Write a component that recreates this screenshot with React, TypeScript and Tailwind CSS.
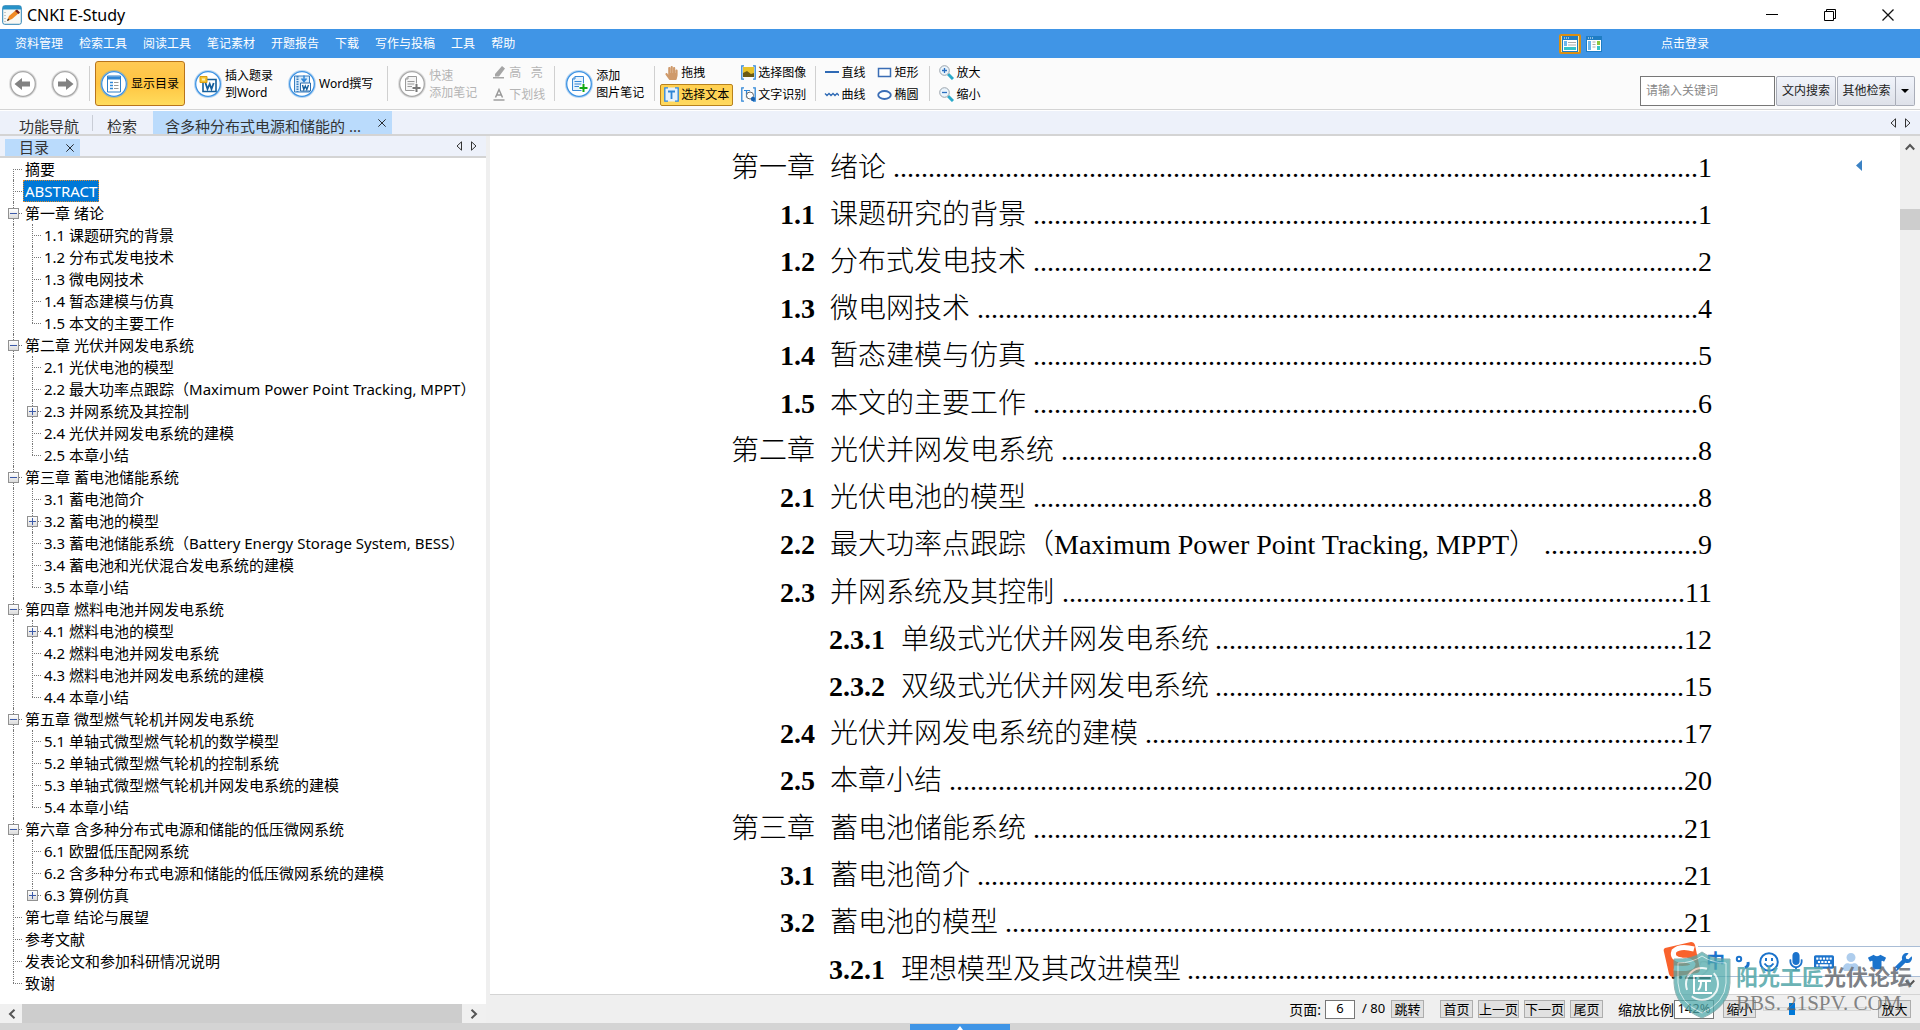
import React, { useLayoutEffect, useRef, useState } from "react";
import { FaHandPaper, FaKeyboard, FaMicrophone, FaTshirt, FaUser, FaWrench } from "react-icons/fa";

type TreeItem = { t: string; l: 0 | 1; box?: "minus" | "plus"; last?: boolean; sel?: boolean };

const tree: TreeItem[] = [
  { t: "摘要", l: 0 },
  { t: "ABSTRACT", l: 0, sel: true },
  { t: "第一章 绪论", l: 0, box: "minus" },
  { t: "1.1 课题研究的背景", l: 1 },
  { t: "1.2 分布式发电技术", l: 1 },
  { t: "1.3 微电网技术", l: 1 },
  { t: "1.4 暂态建模与仿真", l: 1 },
  { t: "1.5 本文的主要工作", l: 1, last: true },
  { t: "第二章 光伏并网发电系统", l: 0, box: "minus" },
  { t: "2.1 光伏电池的模型", l: 1 },
  { t: "2.2 最大功率点跟踪（Maximum Power Point Tracking, MPPT）", l: 1 },
  { t: "2.3 并网系统及其控制", l: 1, box: "plus" },
  { t: "2.4 光伏并网发电系统的建模", l: 1 },
  { t: "2.5 本章小结", l: 1, last: true },
  { t: "第三章 蓄电池储能系统", l: 0, box: "minus" },
  { t: "3.1 蓄电池简介", l: 1 },
  { t: "3.2 蓄电池的模型", l: 1, box: "plus" },
  { t: "3.3 蓄电池储能系统（Battery Energy Storage System, BESS）", l: 1 },
  { t: "3.4 蓄电池和光伏混合发电系统的建模", l: 1 },
  { t: "3.5 本章小结", l: 1, last: true },
  { t: "第四章 燃料电池并网发电系统", l: 0, box: "minus" },
  { t: "4.1 燃料电池的模型", l: 1, box: "plus" },
  { t: "4.2 燃料电池并网发电系统", l: 1 },
  { t: "4.3 燃料电池并网发电系统的建模", l: 1 },
  { t: "4.4 本章小结", l: 1, last: true },
  { t: "第五章 微型燃气轮机并网发电系统", l: 0, box: "minus" },
  { t: "5.1 单轴式微型燃气轮机的数学模型", l: 1 },
  { t: "5.2 单轴式微型燃气轮机的控制系统", l: 1 },
  { t: "5.3 单轴式微型燃气轮机并网发电系统的建模", l: 1 },
  { t: "5.4 本章小结", l: 1, last: true },
  { t: "第六章 含多种分布式电源和储能的低压微网系统", l: 0, box: "minus" },
  { t: "6.1 欧盟低压配网系统", l: 1 },
  { t: "6.2 含多种分布式电源和储能的低压微网系统的建模", l: 1 },
  { t: "6.3 算例仿真", l: 1, box: "plus", last: true },
  { t: "第七章 结论与展望", l: 0 },
  { t: "参考文献", l: 0 },
  { t: "发表论文和参加科研情况说明", l: 0 },
  { t: "致谢", l: 0, last: true },
];

const contents: [0 | 1 | 2, string, string, string][] = [
  [0, "第一章", "绪论", "1"],
  [1, "1.1", "课题研究的背景", "1"],
  [1, "1.2", "分布式发电技术", "2"],
  [1, "1.3", "微电网技术", "4"],
  [1, "1.4", "暂态建模与仿真", "5"],
  [1, "1.5", "本文的主要工作", "6"],
  [0, "第二章", "光伏并网发电系统", "8"],
  [1, "2.1", "光伏电池的模型", "8"],
  [1, "2.2", "最大功率点跟踪（Maximum Power Point Tracking, MPPT）", "9"],
  [1, "2.3", "并网系统及其控制", "11"],
  [2, "2.3.1", "单级式光伏并网发电系统", "12"],
  [2, "2.3.2", "双级式光伏并网发电系统", "15"],
  [1, "2.4", "光伏并网发电系统的建模", "17"],
  [1, "2.5", "本章小结", "20"],
  [0, "第三章", "蓄电池储能系统", "21"],
  [1, "3.1", "蓄电池简介", "21"],
  [1, "3.2", "蓄电池的模型", "21"],
  [2, "3.2.1", "理想模型及其改进模型", "22"],
];

const numberCell = {
  0: "w-[99px]",
  1: "ml-[49px] w-[50px] font-bold",
  2: "ml-[98px] w-[72px] font-bold",
};

const DOT_WIDTH = 7;

/** Row of leader dots that fills the space between a title and its page number. */
function Leader() {
  const ref = useRef<HTMLSpanElement>(null);
  const [count, setCount] = useState(0);
  useLayoutEffect(() => {
    const el = ref.current;
    if (!el) return;
    const fit = () => setCount(Math.max(0, Math.floor((el.clientWidth - 2) / DOT_WIDTH)));
    fit();
    const ro = new ResizeObserver(fit);
    ro.observe(el);
    return () => ro.disconnect();
  }, []);
  return (
    <span ref={ref} aria-hidden="true" className="min-w-0 flex-1 basis-0 text-right">
      {".".repeat(count)}
    </span>
  );
}

function Guide({ half, stub, box }: { half?: "top" | "bottom"; stub?: boolean; box?: "minus" | "plus" }) {
  const span = half === "top" ? "top-0 h-[11px]" : half === "bottom" ? "top-[11px] h-[11px]" : "top-0 h-[22px]";
  return (
    <span className="relative flex h-[22px] w-[19px] shrink-0 items-center justify-center">
      <span className={"absolute left-[9px] border-l border-dotted border-[#777] " + span} />
      {stub && <span className="absolute left-[9px] top-[11px] w-[9px] border-t border-dotted border-[#777]" />}
      {box && (
        <button aria-label={box === "minus" ? "折叠" : "展开"} className="relative h-[11px] w-[11px] border border-[#919191] bg-linear-to-b from-white to-[#dcdcdc]">
          <svg viewBox="0 0 9 9" className="block h-[9px] w-[9px]" stroke="#3c5aa8" fill="none">
            <path d={box === "minus" ? "M1 4.5h7" : "M1 4.5h7M4.5 1v7"} />
          </svg>
        </button>
      )}
    </span>
  );
}

function Tree() {
  return (
    <ul className="flex-1 overflow-hidden bg-white pl-1 text-[15px] leading-[22px]">
      {tree.map((n, i) => (
        <li key={n.t} className="flex h-[22px] items-center whitespace-nowrap">
          {n.l === 0 ? (
            <Guide half={i === 0 ? "bottom" : n.last ? "top" : undefined} stub box={n.box} />
          ) : (
            <>
              <Guide />
              <Guide half={n.last ? "top" : undefined} stub box={n.box} />
            </>
          )}
          <a
            href="#"
            className={
              n.sel
                ? "flex h-[22px] items-center border border-dotted border-[#e08a2c] bg-[#0078d7] px-px text-white"
                : "flex h-[22px] items-center px-[2px] text-black"
            }
          >
            {n.t}
          </a>
        </li>
      ))}
    </ul>
  );
}

function Arrows() {
  return (
    <div className="flex items-center gap-[9px]">
      <button aria-label="向左">
        <svg viewBox="0 0 6 10" className="block h-[10px] w-[6px]" fill="none" stroke="#333">
          <path d="M5.5 .8v8.4L1 5z" />
        </svg>
      </button>
      <button aria-label="向右">
        <svg viewBox="0 0 6 10" className="block h-[10px] w-[6px]" fill="none" stroke="#333">
          <path d="M.5 .8v8.4L5 5z" />
        </svg>
      </button>
    </div>
  );
}

function Round({ gray, children }: { gray?: boolean; children: React.ReactNode }) {
  const c = gray ? "#a9a9a9" : "#3d93e3";
  return (
    <svg viewBox="0 0 28 28" className="block h-7 w-7 shrink-0">
      <circle cx="14" cy="14" r="13" fill="#fff" stroke={c} strokeOpacity=".35" strokeWidth="2" />
      <circle cx="14" cy="14" r="12.3" fill="#fff" stroke={c} strokeWidth="1.3" />
      {children}
    </svg>
  );
}

function NoteIcon({ gray }: { gray?: boolean }) {
  const c = gray ? "#9a9a9a" : "#3a8ad6";
  return (
    <Round gray={gray}>
      <path d="M10 6.5h8.500v14h-11V9z" fill={gray ? "#f4f4f4" : "#e6f2fd"} stroke={c} />
      <path d="M7.500 9H10V6.500M9.500 11.500h7M9.500 14h7M9.500 16.500h5" stroke={c} fill="none" />
      <path d="M18.500 13.500v9M14 18h9" stroke="#fff" strokeWidth="4" />
      <path d="M18.500 14v8M14.500 18h8" stroke={gray ? "#777" : "#13a813"} strokeWidth="2" />
    </Round>
  );
}

function Sep() {
  return <span className="h-[35px] w-px shrink-0 bg-[#d0d0d0]" />;
}

function Tool({ icon, label, active }: { icon: React.ReactNode; label: string; active?: boolean }) {
  return (
    <button
      className={
        active
          ? "flex h-[22px] items-center gap-[2px] rounded-[2px] border border-[#b8821c] bg-linear-to-b from-[#ffcf4f] to-[#ffd95e] px-[3px] whitespace-nowrap"
          : "flex h-[22px] items-center gap-[2px] px-1 whitespace-pre"
      }
    >
      <span className="flex h-[15px] w-[15px] shrink-0 items-center justify-center">{icon}</span>
      {label}
    </button>
  );
}

const s15 = "block h-[15px] w-[15px]";

function Magnifier({ plus }: { plus?: boolean }) {
  return (
    <svg viewBox="0 0 15 15" className={s15} fill="none">
      <path d="M9 9l5 5" stroke="#2aa9c9" strokeWidth="3" />
      <circle cx="5.500" cy="5.500" r="4.800" fill="#eaf4fc" stroke="#9aa3ab" />
      <path d={plus ? "M3 5.500h5M5.500 3v5" : "M3 5.500h5"} stroke="#2b6fc0" strokeWidth="1.300" />
    </svg>
  );
}

function Toolbar() {
  return (
    <div className="flex h-[51px] shrink-0 items-center bg-[#fbfbfb] text-[12px] leading-[17px] text-black">
      <button aria-label="后退" className="ml-[9px]">
        <Round gray>
          <path d="M5.500 14l7.500-6v3.500h8v5h-8V20z" fill="#828282" />
        </Round>
      </button>
      <button aria-label="前进" className="ml-[14px] mr-[10px]">
        <Round gray>
          <path d="M22.500 14L15 8v3.500H7v5h8V20z" fill="#828282" />
        </Round>
      </button>
      <Sep />
      <button className="ml-[5px] flex h-[45px] w-[90px] items-center gap-[3px] rounded-[3px] border border-[#b8741c] bg-linear-to-b from-[#ffc955] via-[#ffc440] to-[#ffdc5c] pl-1 whitespace-nowrap">
        <Round>
          <path d="M7.500 6h13v16h-13z" fill="#fff" stroke="#2f7fc8" />
          <path d="M8 6.500h12v3H8z" fill="#2f86d6" />
          <path d="M10 12.500h3M10 15.500h3M10 18.500h3" stroke="#2f86d6" strokeWidth="1.300" />
          <path d="M14 12.500h4.500M14 15.500h4.500M14 18.500h4.500" stroke="#999" />
        </Round>
        显示目录
      </button>
      <button className="ml-[9px] flex items-center gap-[3px] text-left whitespace-nowrap">
        <Round>
          <path d="M9 9.500h13v12H9z" fill="#fff" stroke="#155f9c" strokeWidth="1.600" />
          <path d="M11.500 13l2 6 2.200-5 1.800 5 2.200-6" fill="none" stroke="#155f9c" strokeWidth="1.800" />
          <path d="M6 6.500h7v6H6z" fill="#f6c430" stroke="#d99c12" />
          <path d="M8 8.500h3v2H8z" fill="#fdf0b0" />
        </Round>
        <span>插入题录<br />到Word</span>
      </button>
      <button className="ml-[15px] mr-[14px] flex items-center gap-[3px] whitespace-nowrap">
        <Round>
          <path d="M6.500 6h15v16h-15z" fill="#d6eafb" stroke="#3a7fc0" />
          <path d="M9.500 6v16" stroke="#3a7fc0" strokeWidth="2" strokeDasharray="1.500 1" />
          <path d="M16 5.500v5M13.500 8.500l2.500 3 2.500-3" fill="none" stroke="#2f86d6" strokeWidth="1.500" />
          <path d="M12.500 13h10v8h-10z" fill="#fff" stroke="#2a6cab" />
          <path d="M14.500 15l1.300 4.500 1.500-3.500 1.500 3.500L20.500 15" fill="none" stroke="#155f9c" strokeWidth="1.400" />
        </Round>
        Word撰写
      </button>
      <Sep />
      <button disabled className="ml-[10px] flex items-center gap-[3px] text-left whitespace-nowrap text-[#b4b4b4]">
        <NoteIcon gray />
        <span>快速<br />添加笔记</span>
      </button>
      <div className="ml-[11px] mr-[5px] flex flex-col text-[#b4b4b4]">
        <Tool
          label="高   亮"
          icon={
            <svg viewBox="0 0 15 15" className={s15} fill="#a5a5a5">
              <path d="M3 9l7-8 3 2.500-6 8H3zM1 12h11v1.500H1z" />
            </svg>
          }
        />
        <Tool
          label="下划线"
          icon={
            <svg viewBox="0 0 15 15" className={s15} fill="none" stroke="#999">
              <path d="M3.500 10.500L7 2.500l3.500 8M5 8h4.500" strokeWidth="1.500" />
              <path d="M1.500 13h11" strokeWidth="1.400" />
            </svg>
          }
        />
      </div>
      <Sep />
      <button className="ml-[10px] mr-[10px] flex items-center gap-[3px] text-left whitespace-nowrap">
        <NoteIcon />
        <span>添加<br />图片笔记</span>
      </button>
      <Sep />
      <div className="ml-[5px] flex flex-col items-start">
        <Tool label="拖拽" icon={<FaHandPaper className="h-[14px] w-[13px] text-[#cf9a6b]" />} />
        <Tool
          active
          label="选择文本"
          icon={
            <svg viewBox="0 0 15 15" className={s15} fill="none" stroke="#2f86d6">
              <path d="M.5 .5h14v14H.5z" fill="#e4f1fd" stroke="none" />
              <path d="M4 .8H.8v13.400H4M11 .8h3.200v13.400H11" strokeWidth="1.300" />
              <path d="M4 4.500h7M7.500 4.500V12" strokeWidth="1.800" />
            </svg>
          }
        />
      </div>
      <div className="ml-1 mr-[5px] flex flex-col items-start">
        <Tool
          label="选择图像"
          icon={
            <svg viewBox="0 0 15 15" className={s15} fill="none">
              <path d="M2 2h11v10H2z" fill="#e8c22a" />
              <path d="M2 8l4-2 4 3 3-1v4H2z" fill="#6b5a14" />
              <path d="M3 .8H.8v13.400H3M12 .8h2.200v13.400H12" stroke="#2f86d6" strokeWidth="1.300" />
            </svg>
          }
        />
        <Tool
          label="文字识别"
          icon={
            <svg viewBox="0 0 15 15" className={s15} fill="none">
              <path d="M3 .8H.8v13.400H3M12 .8h2.200v13.400H12" stroke="#2f86d6" strokeWidth="1.300" />
              <path d="M3 3.500h6M5.500 3.500v7" stroke="#2f86d6" strokeWidth="1.200" />
              <circle cx="9" cy="8.500" r="3.500" stroke="#666" fill="#fff" />
              <circle cx="12" cy="12" r="2.200" fill="#1a62b0" />
            </svg>
          }
        />
      </div>
      <Sep />
      <div className="ml-[4px] grid grid-cols-2 gap-x-[4px]">
        <Tool label="直线" icon={<svg viewBox="0 0 15 15" className={s15} stroke="#2f6ab5" strokeWidth="2"><path d="M1 7h14" /></svg>} />
        <Tool label="矩形" icon={<svg viewBox="0 0 15 15" className={s15} fill="#fff" stroke="#3a6db5" strokeWidth="1.500"><path d="M1.500 3.500h12v8h-12z" /></svg>} />
        <Tool label="曲线" icon={<svg viewBox="0 0 15 15" className={s15} fill="none" stroke="#2f6ab5" strokeWidth="1.300"><path d="M1 6.500l2 2 2-2 2 2 2-2 2 2 2-2 2 2" /></svg>} />
        <Tool label="椭圆" icon={<svg viewBox="0 0 15 15" className={s15} fill="#fff" stroke="#3a6db5" strokeWidth="1.800"><ellipse cx="7.500" cy="8" rx="6.300" ry="4" /></svg>} />
      </div>
      <span className="w-[7px]" />
      <Sep />
      <div className="ml-[5px] flex flex-col items-start">
        <Tool label="放大" icon={<Magnifier plus />} />
        <Tool label="缩小" icon={<Magnifier />} />
      </div>
      <div className="ml-auto mr-[5px] mt-[14px] flex h-[30px] text-[12px] text-[#222]">
        <input aria-label="关键词" placeholder="请输入关键词" className="w-[135px] border border-[#777] bg-white px-[5px] placeholder:text-[#888]" />
        <button className="ml-px w-[60px] rounded-[2px] border border-[#a9adb8] bg-linear-to-b from-[#f1f4fb] to-[#dee1e9] whitespace-nowrap">文内搜索</button>
        <button className="ml-px w-[59px] rounded-l-[2px] border border-[#a9adb8] bg-linear-to-b from-[#f1f4fb] to-[#dee1e9] whitespace-nowrap">其他检索</button>
        <button aria-label="更多检索" className="flex w-[19px] items-center justify-center rounded-r-[2px] border border-l-0 border-[#a9adb8] bg-linear-to-b from-[#f1f4fb] to-[#dee1e9]">
          <svg viewBox="0 0 8 4" className="h-1 w-2"><path d="M0 0h8L4 4z" /></svg>
        </button>
      </div>
    </div>
  );
}

function Cross({ size }: { size: string }) {
  return (
    <svg viewBox="0 0 12 12" className={size} stroke="#111" fill="none" strokeWidth="1.300">
      <path d="M.5 .5l11 11M11.500 .5l-11 11" />
    </svg>
  );
}

function ImeBar() {
  return (
    <div className="absolute bottom-[53px] right-0 flex h-[31px] w-[222px] items-center border-y border-[#a9bdd6] bg-white/85 pl-[4px] text-[#1b73cc]">
      <svg viewBox="0 0 40 38" className="absolute -left-[35px] -top-[6px] h-[38px] w-[40px]">
        <path d="M2 7L28 1q3 0 4 3l5 24q0 3-3 4l-24 4q-3 0-4-3L1 11q-1-3 1-4z" fill="#f9622c" />
        <path d="M31 8q-14-4-20 2-3 8 8 9 9 0 11 4 0 6-19 4" fill="none" stroke="#fff" strokeWidth="5" />
      </svg>
      <span className="w-[27px] text-center text-[19px] font-bold leading-none">中</span>
      <svg viewBox="0 0 16 16" className="ml-[6px] h-4 w-4" fill="none" stroke="currentColor" strokeWidth="2">
        <circle cx="4" cy="5" r="2.200" />
        <path d="M13 8q1 4-3 6" strokeWidth="3" />
      </svg>
      <svg viewBox="0 0 20 20" className="ml-[8px] h-5 w-5" fill="none" stroke="currentColor" strokeWidth="2">
        <circle cx="10" cy="10" r="8.800" />
        <path d="M7 6v3M13 6v3M5.500 11.500q4.500 6 9 0" />
      </svg>
      <FaMicrophone className="ml-[9px] h-[19px] w-4" />
      <FaKeyboard className="ml-[10px] h-[20px] w-[20px]" />
      <FaUser className="ml-[9px] h-[18px] w-4 opacity-35" />
      <FaTshirt className="ml-[9px] h-[18px] w-[18px]" />
      <FaWrench className="ml-[8px] h-[18px] w-[18px]" />
    </div>
  );
}

function Watermark() {
  return (
    <div className="pointer-events-none absolute bottom-[11px] right-[8px] flex h-[68px] items-start whitespace-nowrap">
      <svg viewBox="0 0 60 68" className="h-[68px] w-[60px] opacity-75" fill="none">
        <path d="M30 1q10 8 28 7v24q-1 24-28 35Q3 56 2 32V8q18 1 28-7z" fill="#4fa9aa" stroke="#6f9c9c" />
        <path d="M30 5q10 7 24 7v20q-1 20-24 30Q7 52 6 32V12q14 0 24-7z" stroke="#c8e6e6" />
        <circle cx="30" cy="33" r="16" stroke="#e8f5f5" strokeWidth="2" strokeDasharray="36 8" />
        <path d="M40 25H22v17h18M26 30h13M29 30q0 7-3 9M34 30v10" stroke="#fff" strokeWidth="2" />
      </svg>
      <div className="ml-1 pt-[8px]">
        <div className="h-[34px] text-[22px] font-bold leading-[34px]">
          <span className="text-[#58a9ab]/90">阳光工匠</span>
          <span className="text-[#6c7076]/90">光伏论坛</span>
        </div>
        <div className="font-['Liberation_Serif',serif] text-[21px] leading-[20px] text-[#666]/80">BBS. 21SPV. COM</div>
      </div>
    </div>
  );
}

const pageButton = "h-[18px] border border-[#adadad] bg-[#e1e1e1] leading-[16px] whitespace-nowrap";

export default function App() {
  return (
    <div className="relative flex h-screen flex-col overflow-hidden bg-[#d4d4d4] font-['Noto_Sans','Noto_Sans_CJK_SC',sans-serif] text-black">
      <header className="flex h-[29px] shrink-0 items-center bg-white pl-[2px] pr-[3px]">
        <svg viewBox="0 0 20 20" className="h-5 w-5">
          <rect x=".7" y=".7" width="18.600" height="18.600" rx="2" fill="#f8f8f4" stroke="#2c83b5" />
          <path d="M1 1h18v3.500H1z" fill="#2792c8" />
          <path d="M3 7v10" stroke="#999" strokeDasharray="1 2" />
          <path d="M5 16l2-5 7-6 3 3-7 6z" fill="#f08a24" />
          <path d="M13 6l2-1.500 3 3L16.500 9z" fill="#6b1d1d" />
          <path d="M5 16l1-2.500 1.500 1.500z" fill="#222" />
        </svg>
        <h1 className="ml-[5px] text-[16px] leading-5">CNKI E-Study</h1>
        <div className="ml-auto flex">
          <button aria-label="最小化" className="flex h-[29px] w-[58px] items-center justify-center">
            <span className="h-px w-3 bg-black" />
          </button>
          <button aria-label="还原" className="flex h-[29px] w-[58px] items-center justify-center">
            <svg viewBox="0 0 12 12" className="h-3 w-3" fill="none" stroke="#000">
              <path d="M.5 2.500h9v9h-9zM2.500 2.500v-2h9v9h-2" />
            </svg>
          </button>
          <button aria-label="关闭" className="flex h-[29px] w-[58px] items-center justify-center">
            <Cross size="h-3 w-3" />
          </button>
        </div>
      </header>

      <nav className="flex h-[29px] shrink-0 items-center bg-[#4095e6] pl-[15px] text-[12px] text-white">
        <div className="flex gap-4">
          {["资料管理", "检索工具", "阅读工具", "笔记素材", "开题报告", "下载", "写作与投稿", "工具", "帮助"].map((m) => (
            <button key={m} className="whitespace-nowrap">{m}</button>
          ))}
        </div>
        <button aria-label="横向布局" className="ml-auto flex h-5 w-[22px] items-center justify-center rounded-[2px] border-2 border-[#d98e12] bg-[#ffe08a]">
          <svg viewBox="0 0 16 16" className="h-4 w-4">
            <path d="M0 0h16v16H0z" fill="#1f7dc4" />
            <path d="M1 4h14v11H1z" fill="#fff" />
            <path d="M2 5h3v5H2z" fill="#6cb6ee" />
            <path d="M6 6.500h8M6 9h8" stroke="#aaa" />
            <path d="M2 11h12v3H2z" fill="#35c3c9" />
            <path d="M2 2h1M4 2h1M6 2h1" stroke="#fff" />
          </svg>
        </button>
        <button aria-label="纵向布局" className="ml-[5px]">
          <svg viewBox="0 0 16 16" className="block h-4 w-4">
            <path d="M0 0h16v16H0z" fill="#1f7dc4" />
            <path d="M1 4h14v11H1z" fill="#fff" />
            <path d="M2 5h3v9H2z" fill="#6cb6ee" />
            <path d="M6.500 6h3M6.500 8.500h3M6.500 11h3" stroke="#aaa" />
            <path d="M11 5h3v4h-3z" fill="#8cc63f" />
            <path d="M11 10h3v4h-3z" fill="#35c3c9" />
            <path d="M2 2h1M4 2h1M6 2h1" stroke="#fff" />
          </svg>
        </button>
        <button className="ml-[59px] mr-[211px] whitespace-nowrap">点击登录</button>
      </nav>

      <Toolbar />

      <div className="mt-px flex h-6 shrink-0 items-stretch border-t border-white bg-[#edf1fa] text-[15px] text-[#333]">
        <button className="flex items-center pl-[19px] pt-[6px] leading-[18px] whitespace-nowrap">功能导航</button>
        <span className="ml-[13px] mt-1 h-4 w-px bg-[#c9cdd6]" />
        <button className="flex items-center pl-[14px] pt-[6px] leading-[18px] whitespace-nowrap">检索</button>
        <div className="ml-4 flex w-[239px] items-center justify-between bg-[#badbfc] pl-[12px] pr-[6px]">
          <button className="pt-[6px] leading-[18px] whitespace-nowrap">含多种分布式电源和储能的 ...</button>
          <button aria-label="关闭标签"><Cross size="h-2 w-2" /></button>
        </div>
        <div className="ml-auto flex items-center pr-[9px]"><Arrows /></div>
      </div>

      <div className="mt-[2px] flex min-h-0 flex-1">
        <aside className="flex w-[490px] shrink-0 flex-col bg-[#efefef] pr-1">
          <div className="flex h-5 shrink-0 items-center bg-[#edf1fa] pl-[5px] pr-[9px] text-[15px] text-[#333]">
            <div className="flex h-[17px] w-[75px] items-center justify-between self-end bg-[#badbfc] pl-[14px] pr-[6px]">
              <span className="leading-[17px]">目录</span>
              <button aria-label="关闭目录"><Cross size="h-2 w-2 block" /></button>
            </div>
            <div className="ml-auto"><Arrows /></div>
          </div>
          <div className="h-[2px] shrink-0 bg-[#d4d4d4]" />
          <Tree />
          <div className="flex h-[19px] shrink-0 items-stretch bg-[#f0f0f0] pl-px">
            <button aria-label="向左滚动" className="flex w-[21px] items-center justify-center">
              <svg viewBox="0 0 8 10" className="h-[10px] w-2" fill="none" stroke="#555" strokeWidth="2"><path d="M6.500 .8L2 5l4.500 4.200" /></svg>
            </button>
            <span className="flex-1 bg-[#cdcdcd]" />
            <button aria-label="向右滚动" className="flex w-[24px] items-center justify-center">
              <svg viewBox="0 0 8 10" className="h-[10px] w-2" fill="none" stroke="#555" strokeWidth="2"><path d="M1.500 .8L6 5 1.500 9.200" /></svg>
            </button>
          </div>
        </aside>

        <main className="flex min-w-0 flex-1 flex-col">
          <div className="flex min-h-0 flex-1 bg-white">
            <ol className="grid min-w-0 flex-1 auto-rows-fr grid-cols-1 pl-[241px] pr-[208px] pt-2 -mr-[20px] font-['Liberation_Serif','Noto_Sans_CJK_SC',serif] text-[28px] leading-[40px] font-light">
              {contents.map(([l, num, title, page]) => (
                <li key={num} className="flex items-center whitespace-nowrap">
                  <span className={"shrink-0 " + numberCell[l]}>{num}</span>
                  <span className="shrink-0">{title}</span>
                  <Leader />
                  <span className="shrink-0">{page}</span>
                </li>
              ))}
            </ol>
            <div className="flex w-5 shrink-0 flex-col items-center bg-[#efefef] py-[7px]">
              <svg viewBox="0 0 10 8" className="h-2 w-[10px]" fill="none" stroke="#555" strokeWidth="2"><path d="M.8 6.500L5 2l4.200 4.500" /></svg>
              <span className="mt-[58px] h-[21px] w-full bg-[#cdcdcd]" />
              <svg viewBox="0 0 10 8" className="mt-auto h-2 w-[10px]" fill="none" stroke="#555" strokeWidth="2"><path d="M.8 1.500L5 6l4.200-4.500" /></svg>
            </div>
          </div>
          <div className="flex h-[29px] shrink-0 items-center border-t border-[#d4d4d4] bg-[#efefef] pr-[9px] text-[13px]">
            <label htmlFor="page" className="ml-auto text-[14px] whitespace-nowrap">页面:</label>
            <input id="page" defaultValue="6" className="ml-1 h-[19px] w-[30px] border border-[#777] bg-white text-center" />
            <span className="ml-[7px] w-[29px] whitespace-nowrap">/ 80</span>
            <button className={pageButton + " w-[33px]"}>跳转</button>
            <button className={pageButton + " ml-[16px] w-[33px]"}>首页</button>
            <button className={pageButton + " ml-[5px] w-[41px]"}>上一页</button>
            <button className={pageButton + " ml-[5px] w-[41px]"}>下一页</button>
            <button className={pageButton + " ml-[5px] w-[33px]"}>尾页</button>
            <label htmlFor="zoom" className="ml-[15px] text-[14px] whitespace-nowrap">缩放比例</label>
            <input id="zoom" defaultValue="142%" className="h-[19px] w-[40px] border border-[#777] bg-white text-center" />
            <button className={pageButton + " ml-[9px] w-[33px]"}>缩小</button>
            <input
              type="range"
              aria-label="缩放"
              min={0}
              max={100}
              defaultValue={25}
              className="ml-[7px] mr-[7px] h-[13px] w-[108px] appearance-none bg-transparent [&::-webkit-slider-runnable-track]:h-[4px] [&::-webkit-slider-runnable-track]:border [&::-webkit-slider-runnable-track]:border-[#d6d6d6] [&::-webkit-slider-runnable-track]:bg-[#e7eaea] [&::-webkit-slider-thumb]:-mt-[5px] [&::-webkit-slider-thumb]:h-3 [&::-webkit-slider-thumb]:w-[6px] [&::-webkit-slider-thumb]:appearance-none [&::-webkit-slider-thumb]:bg-[#0078d7]"
            />
            <button className={pageButton + " w-[33px]"}>放大</button>
          </div>
        </main>
      </div>

      <footer className="flex h-[7px] shrink-0 items-end justify-center">
        <button aria-label="展开面板" className="flex h-[6px] w-[100px] items-end justify-center bg-[#4095e6]">
          <svg viewBox="0 0 6 4" className="h-1 w-[6px]" fill="#fff"><path d="M3 0l3 4H0z" /></svg>
        </button>
      </footer>

      <button aria-label="展开侧栏" className="absolute right-[58px] top-[160px]">
        <svg viewBox="0 0 6 11" className="block h-[11px] w-[6px]" fill="#3b82c4"><path d="M6 0v11L0 5.500z" /></svg>
      </button>
      <ImeBar />
      <Watermark />
    </div>
  );
}
